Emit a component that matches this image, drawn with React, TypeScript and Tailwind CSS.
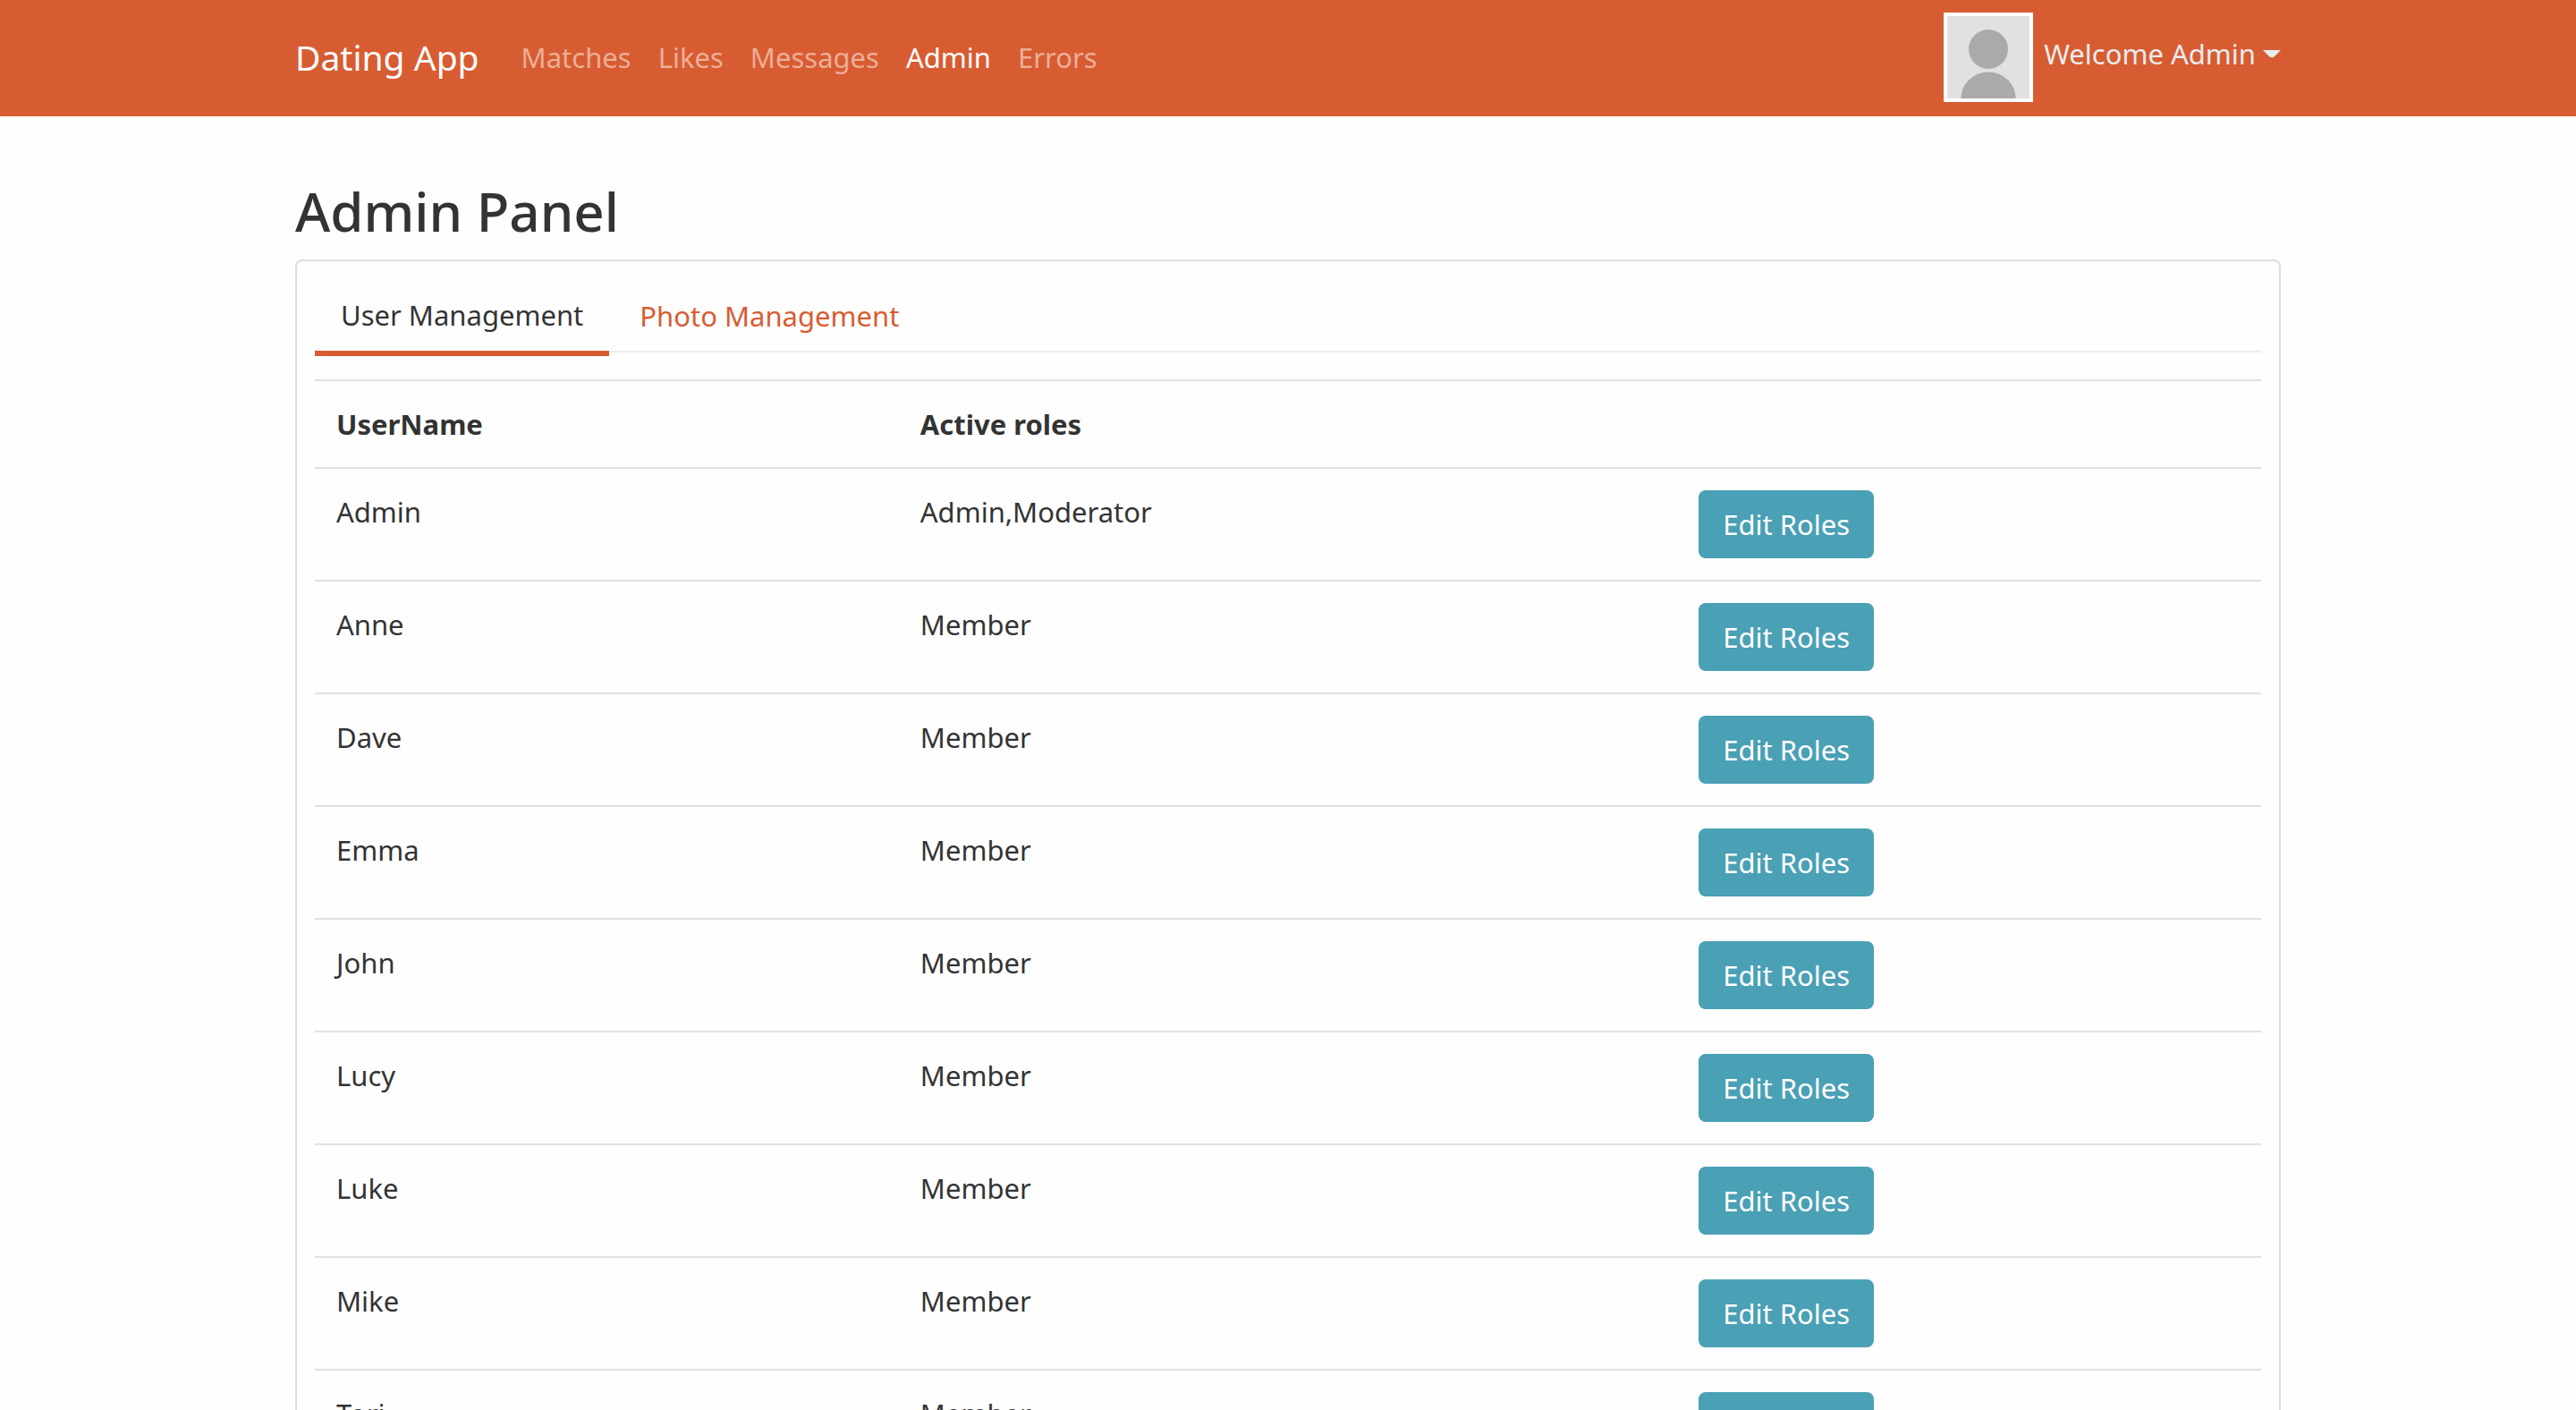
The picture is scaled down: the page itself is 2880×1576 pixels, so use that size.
import React from "react";

const navLinks = [
  { label: "Matches", active: false },
  { label: "Likes", active: false },
  { label: "Messages", active: false },
  { label: "Admin", active: true },
  { label: "Errors", active: false },
];

const users = [
  { name: "Admin", roles: "Admin,Moderator" },
  { name: "Anne", roles: "Member" },
  { name: "Dave", roles: "Member" },
  { name: "Emma", roles: "Member" },
  { name: "John", roles: "Member" },
  { name: "Lucy", roles: "Member" },
  { name: "Luke", roles: "Member" },
  { name: "Mike", roles: "Member" },
  { name: "Tori", roles: "Member" },
];

function Avatar() {
  return (
    <svg viewBox="0 0 92 92" className="block size-[100px] border-4 border-white bg-[#e1e1e1]" role="img" aria-label="Admin avatar">
      <circle cx="46" cy="37" r="22" fill="#aaaaaa" />
      <path d="M15.300 92A30.700 29.500 0 0 1 76.700 92Z" fill="#aaaaaa" />
    </svg>
  );
}

function Header() {
  return (
    <header className="bg-[#d85c32]">
      <div className="mx-auto flex h-[130px] max-w-[2280px] items-center px-[30px] pb-[2px]">
        <a href="#" className="mr-8 text-[39px] leading-[60px] text-white">
          Dating App
        </a>
        <nav className="flex">
          {navLinks.map((link) => (
            <a
              key={link.label}
              href="#"
              aria-current={link.active ? "page" : undefined}
              className={link.active ? "px-[15px] text-white" : "px-[15px] text-[#ecae98]"}
            >
              {link.label}
            </a>
          ))}
        </nav>
        <div className="ml-auto flex items-center gap-3">
          <Avatar />
          <button type="button" className="flex items-center gap-2 pb-2 text-[#e9ecef]">
            Welcome Admin
            <svg viewBox="0 0 20 9" className="h-[9px] w-5" aria-hidden="true">
              <path d="M0 0H20L12.500 7.500Q10 9 7.500 7.500Z" fill="currentColor" />
            </svg>
          </button>
        </div>
      </div>
    </header>
  );
}

function Tabs() {
  return (
    <div role="tablist" className="flex h-[82px] items-start border-b-2 border-[#ececec]">
      <button type="button" role="tab" aria-selected="true" className="h-[86px] border-b-6 border-[#d85c32] px-[29px]">
        User Management
      </button>
      <button type="button" role="tab" aria-selected="false" className="h-[82px] px-[34px] text-[#d85c32]">
        Photo Management
      </button>
    </div>
  );
}

function UserTable() {
  return (
    <table className="mt-[30px] w-full table-fixed border-collapse text-left">
      <thead>
        <tr className="h-[98px] border-t-2 border-[#dee2e6]">
          <th className="w-[30%] px-6 font-bold">UserName</th>
          <th className="w-[40%] px-6 font-bold">Active roles</th>
          <th className="w-[30%] px-6" />
        </tr>
      </thead>
      <tbody>
        {users.map((user) => (
          <tr key={user.name} className="border-t-2 border-[#dee2e6] align-top">
            <td className="p-6">{user.name}</td>
            <td className="p-6">{user.roles}</td>
            <td className="p-6">
              <button type="button" className="block h-[76px] rounded-lg bg-[#4aa0b5] px-[27px] text-white">
                Edit Roles
              </button>
            </td>
          </tr>
        ))}
      </tbody>
    </table>
  );
}

export default function App() {
  return (
    <div className="min-h-screen bg-[#fefefe] font-['Noto_Sans',sans-serif] text-[31px] leading-[48px] text-[#333333]">
      <Header />
      <main className="mx-auto max-w-[2280px] px-[30px] pt-[68px]">
        <h1 className="mb-4 text-[60px] font-medium leading-[76px]">Admin Panel</h1>
        <section className="rounded-lg border-2 border-[#dfdfdf] px-5 pt-5 pb-10">
          <Tabs />
          <UserTable />
        </section>
      </main>
    </div>
  );
}
